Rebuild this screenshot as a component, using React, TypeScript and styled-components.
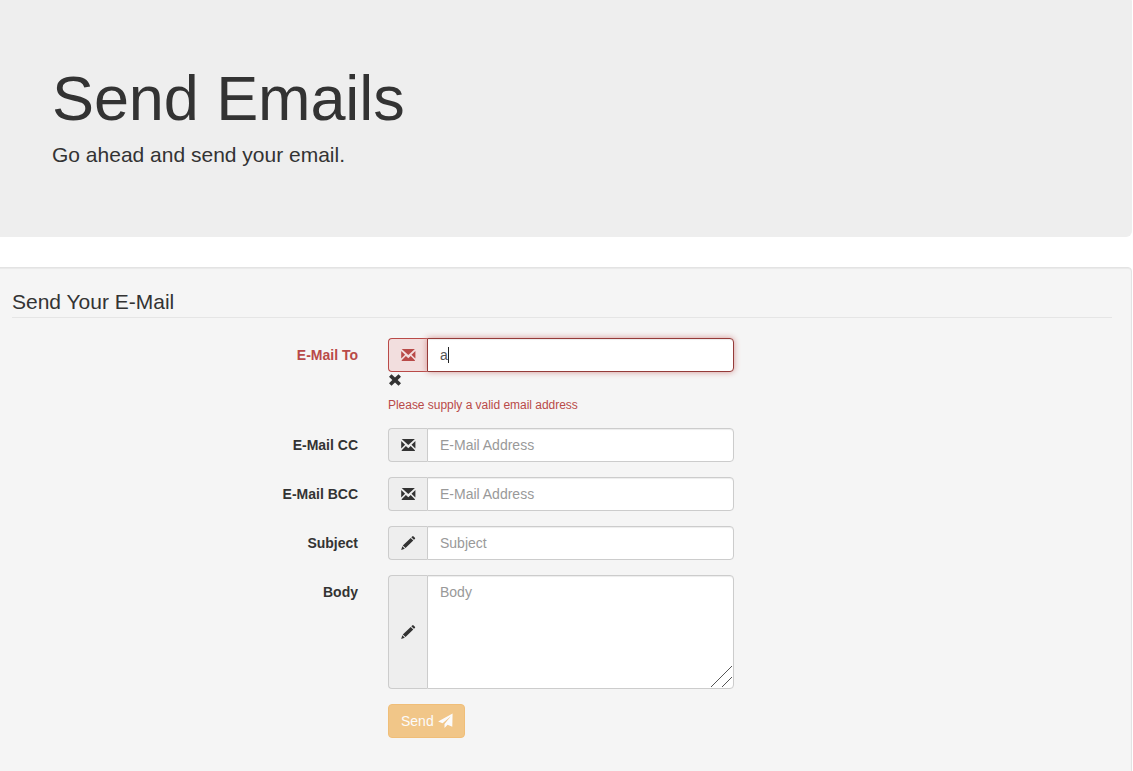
import React from 'react';
import styled, { createGlobalStyle, css } from 'styled-components';

const GlobalStyle = createGlobalStyle`
  *, *::before, *::after { box-sizing: border-box; }
  html, body { margin: 0; height: 100%; overflow: hidden; }
  body {
    background: #fff;
    color: #333;
    font: 14px/20px "Liberation Sans", Arial, sans-serif;
  }
`;

const Page = styled.main`
  width: 1140px;
  height: 775px;
  margin: -4px 0 0 -8px;
  display: flex;
  flex-direction: column;
  gap: 30px;
  overflow: hidden;
`;

const Jumbotron = styled.header`
  flex: none;
  height: 241px;
  padding: 67px 60px 48px;
  border-radius: 6px;
  background: #eee;
`;

const Title = styled.h1`
  margin: 0 0 7px;
  font-size: 63px;
  font-weight: 500;
  line-height: 70px;
  letter-spacing: -0.1px;
`;

const Lead = styled.p`
  margin: 0;
  font-size: 21px;
  line-height: 30px;
`;

const Well = styled.form`
  flex: none;
  height: 540px;
  padding: 19px;
  background: #f5f5f5;
  border: 1px solid #e3e3e3;
  border-radius: 4px;
  box-shadow: inset 0 1px 1px rgba(0, 0, 0, 0.05);
`;

const Legend = styled.h2`
  margin: 0 0 20px;
  font-size: 21px;
  font-weight: 400;
  line-height: 30px;
  border-bottom: 1px solid #e5e5e5;
`;

const FormGroup = styled.div`
  display: grid;
  grid-template-columns: 346px 346px;
  column-gap: 30px;
  margin-bottom: 15px;
`;

const Label = styled.label<{ $error?: boolean }>`
  padding-top: 7px;
  text-align: right;
  font-weight: 700;
  color: ${p => (p.$error ? '#b94a48' : '#333')};
`;

const Column = styled.div`
  grid-column: 2;
`;

const InputGroup = styled.div`
  position: relative;
  display: flex;
`;

const Addon = styled.span<{ $error?: boolean }>`
  flex: none;
  width: 39px;
  display: flex;
  align-items: center;
  padding-left: 12px;
  border: 1px solid ${p => (p.$error ? '#b94a48' : '#ccc')};
  border-right: 0;
  border-radius: 4px 0 0 4px;
  background: ${p => (p.$error ? '#f2dede' : '#eee')};
  color: ${p => (p.$error ? '#b94a48' : '#333')};
`;

const control = css`
  flex: 1;
  min-width: 0;
  margin: 0;
  padding: 6px 12px;
  border: 1px solid #ccc;
  border-radius: 0 4px 4px 0;
  background: #fff;
  color: #555;
  font: 14px/20px "Liberation Sans", Arial, sans-serif;
  box-shadow: inset 0 1px 1px rgba(0, 0, 0, 0.075);
  outline: 0;
  &::placeholder { color: #999; opacity: 1; }
`;

const Input = styled.input`
  ${control}
  height: 34px;
`;

const FocusedInput = styled.div`
  ${control}
  height: 34px;
  display: flex;
  align-items: center;
  border-color: #953b39;
  box-shadow: inset 0 1px 1px rgba(0, 0, 0, 0.075), 0 0 6px #d59392;
`;

const Caret = styled.span`
  width: 1px;
  height: 16px;
  background: #222;
`;

const TextArea = styled.textarea`
  ${control}
  height: 114px;
  resize: none;
`;

const ResizeGrip = styled.svg`
  position: absolute;
  right: 1px;
  bottom: 1px;
`;

const Glyph = styled.svg`
  display: block;
  flex: none;
  fill: currentColor;
`;

const Feedback = styled.div`
  height: 20px;
  padding-top: 1px;
`;

const HelpText = styled.small`
  display: block;
  margin-top: 5px;
  height: 16px;
  font-size: 12px;
  line-height: 17px;
  letter-spacing: -0.03px;
  color: #b94a48;
`;

const SendButton = styled.button`
  display: flex;
  align-items: center;
  gap: 4px;
  width: 77px;
  height: 34px;
  padding: 0 12px;
  border: 1px solid #eea236;
  border-radius: 4px;
  background: #f0ad4e;
  color: #fff;
  font: 14px/20px "Liberation Sans", Arial, sans-serif;
  opacity: 0.65;
`;

const glyphs = {
  envelope: 'M.7 1H13.9L7.3 7.1ZM.2 2.9 4.1 6.8.2 10.4ZM14.4 2.9V10.4L10.5 6.8ZM4.9 8.1 7.3 10.2 9.7 8.1 13.9 12.2V13H.7V12.2Z',
  pencil: 'M11.2.4Q11.9-.2 12.6.4L13.9 1.7Q14.5 2.3 13.9 2.9L12.9 3.8 10.3 1.3ZM9.7 1.9 12.3 4.4 4.5 12.1 1.8 9.5ZM1.3 10.3 3.8 12.7.2 13.9Z',
  remove: 'M3.5 1.3 7 4.5 10.5 1.3 13 3.8 9.7 7 13 10.2 10.5 12.7 7 9.5 3.5 12.7 1 10.2 4.3 7 1 3.8Z',
  send: 'M14.6-.4 14.3 12.7 9.6 10.8 6.5 14V9.9L12.8 2.2 4.6 9.3.1 7.6Z',
};

const Icon = ({ name }: { name: keyof typeof glyphs }) => (
  <Glyph width="14" height="14" viewBox="0 0 14 14" overflow="visible" aria-hidden="true">
    <path d={glyphs[name]} />
  </Glyph>
);

const fields: { label: string; placeholder: string; icon: keyof typeof glyphs }[] = [
  { label: 'E-Mail CC', placeholder: 'E-Mail Address', icon: 'envelope' },
  { label: 'E-Mail BCC', placeholder: 'E-Mail Address', icon: 'envelope' },
  { label: 'Subject', placeholder: 'Subject', icon: 'pencil' },
];

export default function App() {
  return (
    <>
      <GlobalStyle />
      <Page>
        <Jumbotron>
          <Title>Send Emails</Title>
          <Lead>Go ahead and send your email.</Lead>
        </Jumbotron>
        <Well>
          <Legend>Send Your E-Mail</Legend>
          <FormGroup>
            <Label $error>E-Mail To</Label>
            <Column>
              <InputGroup>
                <Addon $error><Icon name="envelope" /></Addon>
                <FocusedInput>a<Caret /></FocusedInput>
              </InputGroup>
              <Feedback><Icon name="remove" /></Feedback>
              <HelpText>Please supply a valid email address</HelpText>
            </Column>
          </FormGroup>
          {fields.map(f => (
            <FormGroup key={f.label}>
              <Label>{f.label}</Label>
              <InputGroup>
                <Addon><Icon name={f.icon} /></Addon>
                <Input placeholder={f.placeholder} />
              </InputGroup>
            </FormGroup>
          ))}
          <FormGroup>
            <Label>Body</Label>
            <InputGroup>
              <Addon><Icon name="pencil" /></Addon>
              <TextArea placeholder="Body" />
              <ResizeGrip width="22" height="22" viewBox="0 0 22 22" aria-hidden="true">
                <path d="M0 21 21 0M11 21 21 11" stroke="#555" fill="none" />
              </ResizeGrip>
            </InputGroup>
          </FormGroup>
          <FormGroup>
            <Column>
              <SendButton type="button">Send<Icon name="send" /></SendButton>
            </Column>
          </FormGroup>
        </Well>
      </Page>
    </>
  );
}
